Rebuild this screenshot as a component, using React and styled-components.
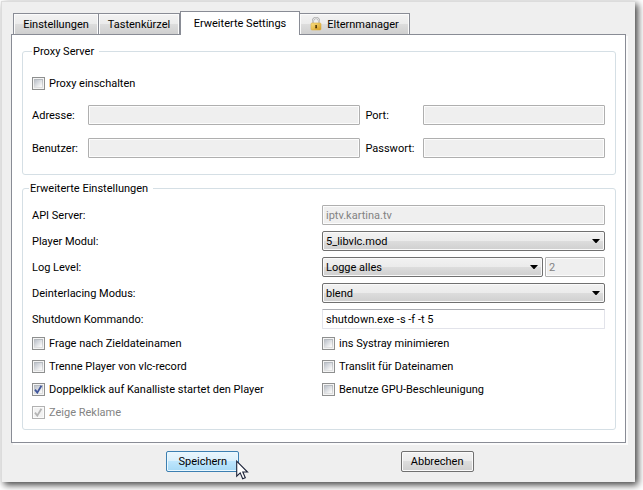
import React, { useState } from "react";
import styled, { createGlobalStyle, css } from "styled-components";

const GlobalStyle = createGlobalStyle`
  *, *::before, *::after { box-sizing: border-box; }
  body {
    margin: 0;
    background: #fff;
    color: #000;
    font: 11px/15px Tahoma, Roboto, sans-serif;
  }
  input, select, button { font: inherit; color: inherit; margin: 0; }
`;

const Page = styled.div`
  padding: 1px 8px 8px 1px;
`;

const Window = styled.main`
  background: #efefef;
  border: 1px solid #dcdcdc;
  border-right: 0;
  border-bottom: 0;
  padding: 9px 9px 10px;
  box-shadow: 3px 3px 7px #444;
`;

const TabBar = styled.div`
  display: flex;
  align-items: flex-end;
  padding-left: 2px;
`;

const Tab = styled.button`
  display: flex;
  align-items: center;
  justify-content: center;
  gap: 5px;
  height: 21px;
  width: ${(p) => p.$width}px;
  padding: 0;
  border: 1px solid #898c95;
  border-bottom: 0;
  border-left-width: ${(p) => (p.$joined ? 0 : 1)}px;
  background: linear-gradient(#f3f3f3 0%, #ebebeb 50%, #dddddd 51%, #cfcfcf 100%);
  box-shadow: inset 1px 1px 0 #fbfbfb, inset -1px 0 0 #fbfbfb;
  white-space: nowrap;

  ${(p) =>
    p.$active &&
    css`
      position: relative;
      height: 24px;
      margin-bottom: -1px;
      padding-bottom: 1px;
      background: #fff;
      box-shadow: none;
    `}
`;

const Panel = styled.section`
  background: #fff;
  border: 1px solid #898c95;
  box-shadow: 2px 2px 0 #fbfbfb;
  padding: 9px 9px 12px 10px;
  display: flex;
  flex-direction: column;
  gap: 6px;
`;

const Group = styled.fieldset`
  min-width: 0;
  margin: 0;
  border: 1px solid #d5dfe5;
  border-radius: 3px;
  padding: ${(p) => p.$padding};
`;

const Legend = styled.legend`
  height: 15px;
  margin-left: ${(p) => p.$indent}px;
  padding: 0 5px 0 1px;
`;

const ProxyGrid = styled.div`
  display: grid;
  grid-template-columns: 56px 3fr 63px 2fr;
  row-gap: 13px;
  align-items: center;
  margin-top: 14px;
`;

const FieldLabel = styled.label`
  white-space: nowrap;
  padding-left: ${(p) => (p.$second ? 5 : 0)}px;
`;

const SettingsGrid = styled.div`
  display: grid;
  grid-template-columns: 1fr 1fr;
  gap: 6px 7px;
  align-items: center;
`;

const TextBox = styled.input`
  width: 100%;
  min-width: 0;
  height: 20px;
  padding: 0 3px;
  background: #fff;
  border: 1px solid #e2e3ea;
  border-top-color: #abadb3;
  border-radius: 1px;

  &:disabled {
    background: #efefef;
    border-color: #afafaf;
    box-shadow: inset 0 0 0 1px #fcfcfc;
    color: #838383;
    opacity: 1;
  }
`;

const SelectBox = styled.span`
  display: grid;
  align-items: center;
  min-width: 0;

  > * { grid-area: 1 / 1; }
  > svg { justify-self: end; margin-right: 5px; pointer-events: none; }
`;

const Select = styled.select`
  appearance: none;
  width: 100%;
  height: 20px;
  padding: 0 18px 0 3px;
  border: 1px solid #707070;
  border-radius: 2px;
  background: linear-gradient(#f2f2f2 0%, #ebebeb 49%, #dddddd 50%, #cfcfcf 100%);
  box-shadow: inset 0 0 0 1px #fafafa;
`;

const LogRow = styled.div`
  display: grid;
  grid-template-columns: 1fr 60px;
  gap: 2px;
`;

const CheckGrid = styled.div`
  display: grid;
  grid-template-columns: 1fr 1fr;
  gap: 8px 7px;
  margin-top: 7px;
`;

const CheckLabel = styled.label`
  display: flex;
  align-items: center;
  gap: 4px;
  white-space: nowrap;
  color: ${(p) => (p.$disabled ? "#838383" : "#000")};
`;

const CheckFrame = styled.span`
  display: grid;
  place-items: center;
  > * { grid-area: 1 / 1; }
  > svg { pointer-events: none; }
`;

const CheckInput = styled.input`
  appearance: none;
  width: 13px;
  height: 13px;
  border: 1px solid #8e8f8f;
  padding: 2px;
  background:
    linear-gradient(135deg, #c3c8d0 10%, #f6f6f6 85%) content-box,
    linear-gradient(#aeb3b9, #e6e6e6) padding-box;
  box-shadow: inset 0 0 0 1px #f4f4f4;

  &:disabled {
    border-color: #b1b1b1;
    background: #f2f2f2;
    box-shadow: inset 0 0 0 1px #fbfbfb;
  }
`;

const Actions = styled.div`
  display: flex;
  justify-content: space-evenly;
  margin: 8px -9px 0 -6px;
`;

const ButtonSlot = styled.div`
  position: relative;
`;

const Button = styled.button`
  display: block;
  min-width: 73px;
  height: 21px;
  padding: 0 6px;
  border: 1px solid ${(p) => (p.$hot ? "#3c7fb1" : "#707070")};
  border-radius: 2px;
  background: ${(p) =>
    p.$hot
      ? "linear-gradient(#eaf6fd 0%, #d9f0fc 49%, #bee6fd 50%, #a7d9f5 100%)"
      : "linear-gradient(#f2f2f2 0%, #ebebeb 49%, #dddddd 50%, #cfcfcf 100%)"};
  box-shadow: inset 0 0 0 1px ${(p) => (p.$hot ? "#e9f8ff" : "#fafafa")};
`;

const Pointer = styled.svg`
  position: absolute;
  left: 70px;
  top: 9px;
  pointer-events: none;
`;

function LockIcon() {
  return (
    <svg width="12" height="14" viewBox="0 0 12 14" aria-hidden="true">
      <defs>
        <linearGradient id="brass" x1="0" x2="1" y1="0" y2="1">
          <stop offset="0" stopColor="#fbe48a" />
          <stop offset="1" stopColor="#d79b1c" />
        </linearGradient>
      </defs>
      <path d="M3 7V4a3 3 0 0 1 6 0v3" fill="none" stroke="#a9a9a9" strokeWidth="2" />
      <path d="M3 7V4a3 3 0 0 1 6 0v3" fill="none" stroke="#e2e2e2" strokeWidth="1" />
      <rect x="1" y="6" width="10" height="7" rx="1" fill="url(#brass)" stroke="#d8ae48" strokeWidth=".6" />
      <path d="M5.3 8h1.6v1.4l.3 1.8H5.1l.3-1.8z" fill="#4b3508" />
    </svg>
  );
}

function Arrow() {
  return (
    <svg width="8" height="4" viewBox="0 0 8 4" aria-hidden="true">
      <path d="M0 0h8L4 4.5z" fill="#000" />
    </svg>
  );
}

function Dropdown({ id, options, defaultValue }) {
  return (
    <SelectBox>
      <Select id={id} defaultValue={defaultValue}>
        {options.map((o) => (
          <option key={o}>{o}</option>
        ))}
      </Select>
      <Arrow />
    </SelectBox>
  );
}

function Check({ children, initial = false, disabled = false }) {
  const [on, setOn] = useState(initial);
  return (
    <CheckLabel $disabled={disabled}>
      <CheckFrame>
        <CheckInput
          type="checkbox"
          checked={on}
          disabled={disabled}
          onChange={(e) => setOn(e.target.checked)}
        />
        {on && (
          <svg width="9" height="9" viewBox="0 0 9 9" aria-hidden="true">
            <path
              d="M1 4.6 3.3 7.6 7.4.8"
              fill="none"
              stroke={disabled ? "#b4b4b4" : "#40569c"}
              strokeWidth="1.8"
            />
          </svg>
        )}
      </CheckFrame>
      {children}
    </CheckLabel>
  );
}

export default function App() {
  return (
    <Page>
      <GlobalStyle />
      <Window>
        <TabBar role="tablist">
          <Tab role="tab" $width={86}>Einstellungen</Tab>
          <Tab role="tab" $width={81} $joined>Tastenkürzel</Tab>
          <Tab role="tab" $width={120} $active aria-selected="true">Erweiterte Settings</Tab>
          <Tab role="tab" $width={110} $joined>
            <LockIcon />
            Elternmanager
          </Tab>
        </TabBar>
        <Panel role="tabpanel">
          <Group $padding="17px 10px 16px 9px">
            <Legend $indent={0}>Proxy Server</Legend>
            <Check>Proxy einschalten</Check>
            <ProxyGrid>
              <FieldLabel htmlFor="address">Adresse:</FieldLabel>
              <TextBox id="address" disabled />
              <FieldLabel htmlFor="port" $second>Port:</FieldLabel>
              <TextBox id="port" disabled />
              <FieldLabel htmlFor="user">Benutzer:</FieldLabel>
              <TextBox id="user" disabled />
              <FieldLabel htmlFor="password" $second>Passwort:</FieldLabel>
              <TextBox id="password" type="password" disabled />
            </ProxyGrid>
          </Group>
          <Group $padding="9px 10px 9px 9px">
            <Legend $indent={-3}>Erweiterte Einstellungen</Legend>
            <SettingsGrid>
              <FieldLabel htmlFor="api">API Server:</FieldLabel>
              <TextBox id="api" defaultValue="iptv.kartina.tv" disabled />
              <FieldLabel htmlFor="player">Player Modul:</FieldLabel>
              <Dropdown id="player" options={["5_libvlc.mod"]} />
              <FieldLabel htmlFor="log">Log Level:</FieldLabel>
              <LogRow>
                <Dropdown id="log" options={["Logge alles"]} />
                <TextBox aria-label="Log Level Wert" defaultValue="2" disabled />
              </LogRow>
              <FieldLabel htmlFor="deinterlace">Deinterlacing Modus:</FieldLabel>
              <Dropdown id="deinterlace" options={["blend"]} />
              <FieldLabel htmlFor="shutdown">Shutdown Kommando:</FieldLabel>
              <TextBox id="shutdown" defaultValue="shutdown.exe -s -f -t 5" />
            </SettingsGrid>
            <CheckGrid>
              <Check>Frage nach Zieldateinamen</Check>
              <Check>ins Systray minimieren</Check>
              <Check>Trenne Player von vlc-record</Check>
              <Check>Translit für Dateinamen</Check>
              <Check initial>Doppelklick auf Kanalliste startet den Player</Check>
              <Check>Benutze GPU-Beschleunigung</Check>
              <Check initial disabled>Zeige Reklame</Check>
            </CheckGrid>
          </Group>
        </Panel>
        <Actions>
          <ButtonSlot>
            <Button $hot>Speichern</Button>
            <Pointer width="13" height="20" viewBox="0 0 13 20" aria-hidden="true">
              <path
                d="M.7 1.2v15l3.5-3.3 2.5 5.9 2.6-1.1-2.5-5.7h4.7z"
                fill="#fff"
                stroke="#1c2238"
                strokeWidth="1.1"
              />
            </Pointer>
          </ButtonSlot>
          <ButtonSlot>
            <Button>Abbrechen</Button>
          </ButtonSlot>
        </Actions>
      </Window>
    </Page>
  );
}
